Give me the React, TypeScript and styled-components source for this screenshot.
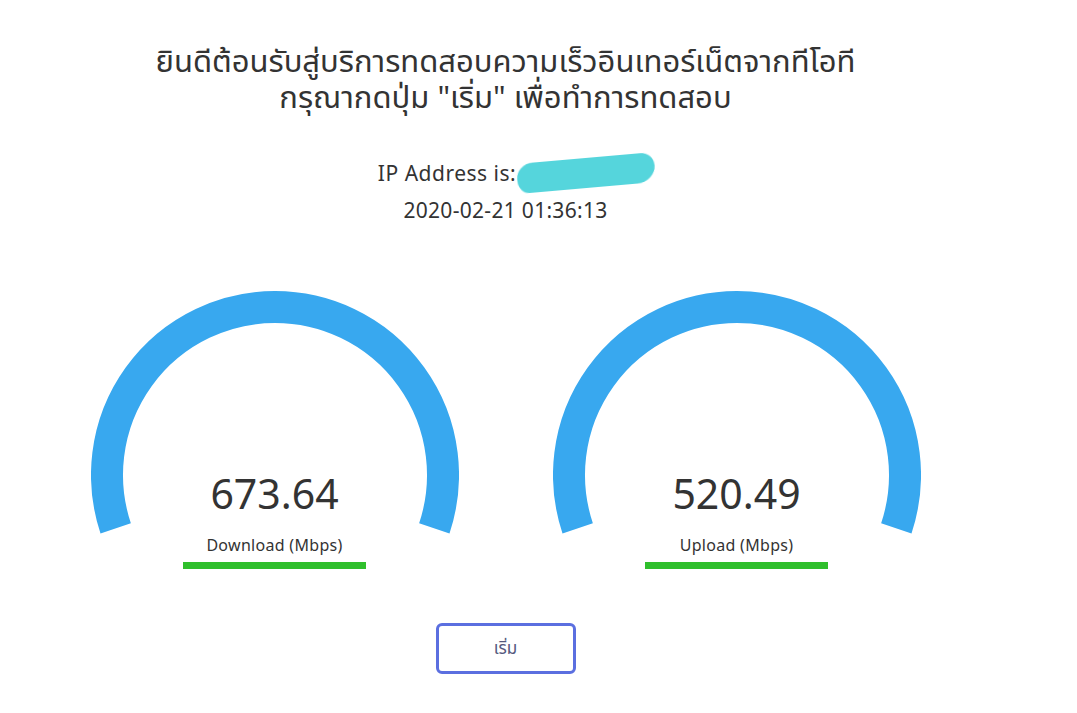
import styled, { createGlobalStyle } from 'styled-components';

const GlobalStyle = createGlobalStyle`
	html, body {
		margin: 0;
		padding: 0;
		background: #ffffff;
	}
	body {
		font-family: 'Noto Sans', 'Noto Sans Thai', 'DejaVu Sans', sans-serif;
		color: #333333;
	}
`;

const START = 198.5;
const END = -18.5;

function polar(cx: number, cy: number, r: number, deg: number) {
	const rad = (deg * Math.PI) / 180;
	return { x: cx + r * Math.cos(rad), y: cy - r * Math.sin(rad) };
}

function GaugeArc() {
	const cx = 184;
	const cy = 184;
	const r = 168;
	const a = polar(cx, cy, r, START);
	const b = polar(cx, cy, r, END);
	const d = `M ${a.x} ${a.y} A ${r} ${r} 0 1 1 ${b.x} ${b.y}`;
	return (
		<ArcSvg width={368} height={244} viewBox="0 0 368 244">
			<path d={d} fill="none" stroke="#38a8ef" strokeWidth={32} />
		</ArcSvg>
	);
}

type GaugeProps = { value: string; label: string };

function Gauge({ value, label }: GaugeProps) {
	return (
		<GaugeBox>
			<GaugeArc />
			<GaugeInfo>
				<Value>{value}</Value>
				<Label>{label}</Label>
				<Bar />
			</GaugeInfo>
		</GaugeBox>
	);
}

function App() {
	return (
		<>
			<GlobalStyle />
			<Page>
				<Heading>
					<p>ยินดีต้อนรับสู่บริการทดสอบความเร็วอินเทอร์เน็ตจากทีโอที</p>
					<p>กรุณากดปุ่ม "เริ่ม" เพื่อทำการทดสอบ</p>
				</Heading>
				<IpRow>
					<span>IP Address is:</span>
					<Masked />
				</IpRow>
				<DateLine>2020-02-21 01:36:13</DateLine>
				<Gauges>
					<Gauge value="673.64" label="Download (Mbps)" />
					<Gauge value="520.49" label="Upload (Mbps)" />
				</Gauges>
				<StartButton>เริ่ม</StartButton>
			</Page>
		</>
	);
}

const Page = styled.div`
	width: 1011px;
	display: flex;
	flex-direction: column;
	align-items: center;
	padding-top: 42px;
`;

const Heading = styled.div`
	text-align: center;
	font-size: 31px;
	line-height: 36px;
	color: #333333;

	p {
		margin: 0;
	}
`;

const IpRow = styled.div`
	display: flex;
	align-items: center;
	margin-top: 42px;
	margin-left: 22px;
	font-size: 21px;
	letter-spacing: 0.5px;
	line-height: 34px;
	color: #333333;
`;

const Masked = styled.span`
	display: inline-block;
	width: 138px;
	height: 30px;
	margin-left: 1px;
	background: #55d5dc;
	border-radius: 18px 14px 20px 12px / 16px 14px 18px 14px;
	transform: rotate(-5deg);
	filter: blur(0.6px);
`;

const DateLine = styled.div`
	margin-top: 6px;
	font-size: 21px;
	letter-spacing: 0.3px;
	line-height: 28px;
	color: #333333;
`;

const Gauges = styled.div`
	display: flex;
	gap: 94px;
	margin-top: 67px;
`;

const GaugeBox = styled.div`
	display: grid;
	width: 368px;
	justify-items: center;

	> * {
		grid-area: 1 / 1;
	}
`;

const ArcSvg = styled.svg`
	display: block;
`;

const GaugeInfo = styled.div`
	display: flex;
	flex-direction: column;
	align-items: center;
	padding-top: 174px;
`;

const Value = styled.div`
	font-size: 41px;
	line-height: 56px;
	color: #333333;
`;

const Label = styled.div`
	margin-top: 12px;
	font-size: 16px;
	letter-spacing: 0.3px;
	line-height: 24px;
	color: #333333;
`;

const Bar = styled.div`
	width: 183px;
	height: 7px;
	margin-top: 5px;
	background: #2fbf2c;
`;

const StartButton = styled.button`
	margin-top: 54px;
	width: 140px;
	height: 51px;
	border: 3px solid #5b6fe0;
	border-radius: 6px;
	background: #ffffff;
	font-family: inherit;
	font-size: 17px;
	color: #55597e;
	cursor: pointer;
`;

export default App;
